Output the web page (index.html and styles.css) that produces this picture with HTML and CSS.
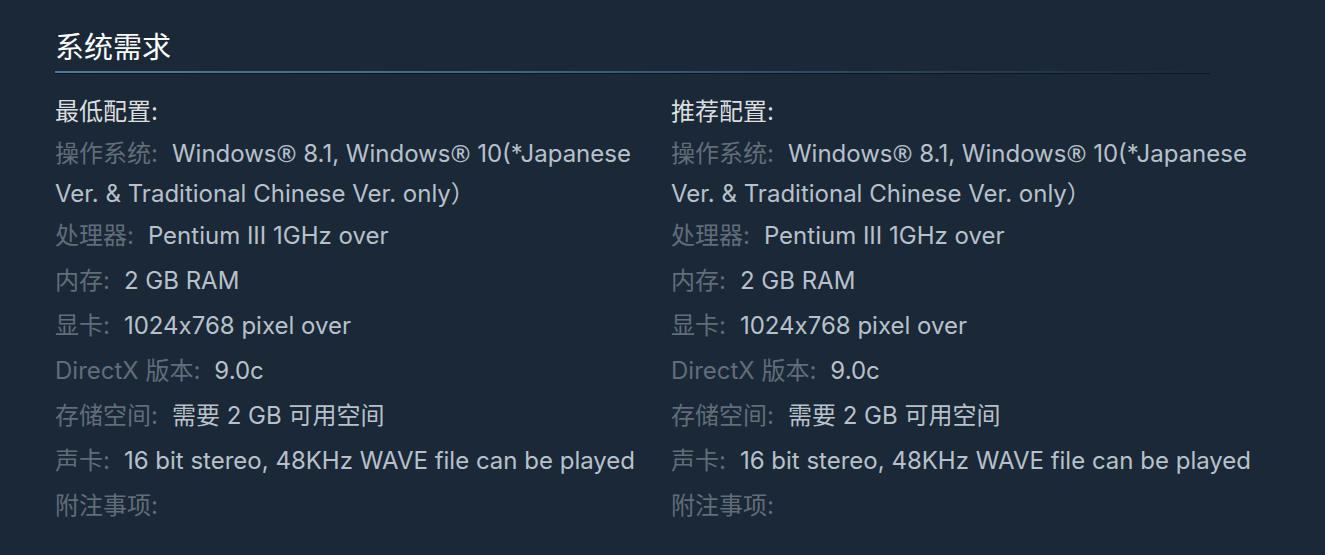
FILE: index.html
```html
<!DOCTYPE html>
<html lang="zh-CN">

<head>
    <meta charset="UTF-8">
    <meta name="viewport" content="width=device-width, initial-scale=1.0">
    <title>系统需求</title>
    <link rel="stylesheet" href="styles.css">
</head>

<body>

    <div class="sysreq">
        <h2 class="block-header">系统需求</h2>

        <div class="sysreq-cols">
            <div class="sysreq-col">
                <strong class="col-title">最低配置:</strong>
                <ul>
                    <li class="wrap"><span class="label">操作系统:</span>Windows<span class="reg">®</span> 8.1, Windows<span class="reg">®</span> 10(*Japanese Ver. &amp; Traditional Chinese Ver. only）</li>
                    <li><span class="label">处理器:</span>Pentium III 1GHz over</li>
                    <li><span class="label">内存:</span>2 GB RAM</li>
                    <li><span class="label">显卡:</span>1024x768 pixel over</li>
                    <li><span class="label">DirectX 版本:</span>9.0c</li>
                    <li><span class="label">存储空间:</span>需要 2 GB 可用空间</li>
                    <li><span class="label">声卡:</span>16 bit stereo, 48KHz WAVE file can be played</li>
                    <li><span class="label">附注事项:</span></li>
                </ul>
            </div>

            <div class="sysreq-col">
                <strong class="col-title">推荐配置:</strong>
                <ul>
                    <li class="wrap"><span class="label">操作系统:</span>Windows<span class="reg">®</span> 8.1, Windows<span class="reg">®</span> 10(*Japanese Ver. &amp; Traditional Chinese Ver. only）</li>
                    <li><span class="label">处理器:</span>Pentium III 1GHz over</li>
                    <li><span class="label">内存:</span>2 GB RAM</li>
                    <li><span class="label">显卡:</span>1024x768 pixel over</li>
                    <li><span class="label">DirectX 版本:</span>9.0c</li>
                    <li><span class="label">存储空间:</span>需要 2 GB 可用空间</li>
                    <li><span class="label">声卡:</span>16 bit stereo, 48KHz WAVE file can be played</li>
                    <li><span class="label">附注事项:</span></li>
                </ul>
            </div>
        </div>
    </div>

</body>

</html>
```

FILE: styles.css
```css
/* General Styles */

body {
    font-family: Inter, "Noto Sans CJK SC", sans-serif;
    margin: 0;
    padding: 0;
    background-color: #1b2838;
    color: #acb2b8;
}

.sysreq {
    padding: 30px 0 0 55px;
    width: 1155px;
}

/* header with fading rule */
.block-header {
    margin: 0;
    font-size: 29px;
    font-weight: normal;
    line-height: 36px;
    color: #ffffff;
    padding-bottom: 7px;
    border-bottom: 1px solid #10161f;
    background-image: linear-gradient(to right, #4b7c9c 0%, #3a6683 40%, rgba(59, 102, 131, 0) 100%);
    background-size: 100% 2px;
    background-position: left bottom;
    background-repeat: no-repeat;
}

.sysreq-cols {
    display: grid;
    grid-template-columns: 596px 596px;
    column-gap: 20px;
    padding-top: 20px;
}

.col-title {
    display: block;
    font-weight: normal;
    font-size: 24px;
    line-height: 36px;
    color: #dcdedf;
}

ul {
    list-style: none;
    margin: 0;
    padding: 0;
}

ul li {
    font-size: 24px;
    line-height: 40px;
    margin-top: 5px;
    color: #b8c1ca;
}

ul li.wrap {
    margin-top: 3px;
}

ul li.wrap + li {
    margin-top: 2px;
}

.label {
    color: #616d79;
    margin-right: 14px;
}

.reg {
    font-family: "Noto Sans", sans-serif;
}
```
